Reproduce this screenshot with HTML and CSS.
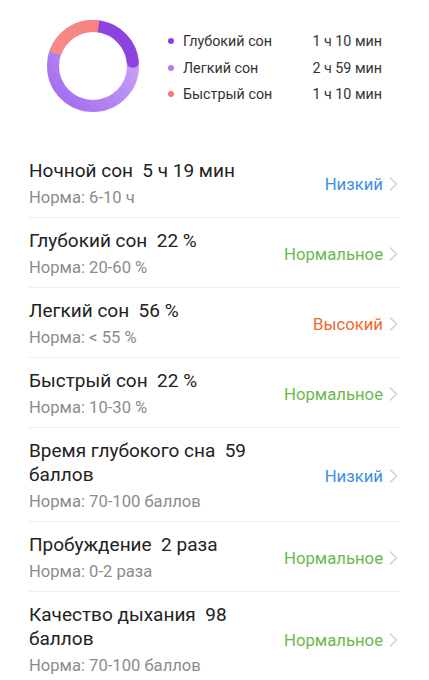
FILE: index.html
```html
<!DOCTYPE html>
<html lang="ru">
<head>
    <meta charset="UTF-8">
    <meta name="viewport" content="width=device-width, initial-scale=1.0">
    <title>Сон</title>
    <link rel="stylesheet" href="styles.css">
</head>
<body>
    <div class="summary">
        <svg class="donut" width="92" height="92" viewBox="0 0 92 92">
            <defs>
                <linearGradient id="gLight" x1="80" y1="20" x2="15" y2="80" gradientUnits="userSpaceOnUse">
                    <stop offset="0" stop-color="#c9a6f7"/>
                    <stop offset="1" stop-color="#a56ff0"/>
                </linearGradient>
                <linearGradient id="gDeep" x1="46" y1="6" x2="86" y2="46" gradientUnits="userSpaceOnUse">
                    <stop offset="0" stop-color="#ad84ea"/>
                    <stop offset="1" stop-color="#8c43df"/>
                </linearGradient>
                <linearGradient id="gRem" x1="8" y1="30" x2="50" y2="6" gradientUnits="userSpaceOnUse">
                    <stop offset="0" stop-color="#f5807c"/>
                    <stop offset="1" stop-color="#f98886"/>
                </linearGradient>
            </defs>
            <circle cx="46" cy="46" r="40" fill="none" stroke="url(#gLight)" stroke-width="12"/>
            <circle cx="46" cy="46" r="40" fill="none" stroke="url(#gDeep)" stroke-width="12"
                    pathLength="360" stroke-dasharray="76 284" stroke-linecap="round"
                    transform="rotate(-82 46 46)"/>
            <circle cx="46" cy="46" r="40" fill="none" stroke="url(#gRem)" stroke-width="12"
                    pathLength="360" stroke-dasharray="80 280"
                    transform="rotate(-162 46 46)"/>
        </svg>
        <div class="legend">
            <div class="legend-row">
                <span class="dot deep"></span>
                <span class="legend-name">Глубокий сон</span>
                <span class="legend-value">1 ч 10 мин</span>
            </div>
            <div class="legend-row">
                <span class="dot light"></span>
                <span class="legend-name">Легкий сон</span>
                <span class="legend-value">2 ч 59 мин</span>
            </div>
            <div class="legend-row">
                <span class="dot rem"></span>
                <span class="legend-name">Быстрый сон</span>
                <span class="legend-value">1 ч 10 мин</span>
            </div>
        </div>
    </div>

    <div class="list" id="list"></div>

    <script>
        const items = [
            { name: 'Ночной сон', value: '5 ч 19 мин', norm: 'Норма: 6-10 ч', status: 'Низкий', level: 'low' },
            { name: 'Глубокий сон', value: '22 %', norm: 'Норма: 20-60 %', status: 'Нормальное', level: 'ok' },
            { name: 'Легкий сон', value: '56 %', norm: 'Норма: < 55 %', status: 'Высокий', level: 'high' },
            { name: 'Быстрый сон', value: '22 %', norm: 'Норма: 10-30 %', status: 'Нормальное', level: 'ok' },
            { name: 'Время глубокого сна', value: '59 баллов', norm: 'Норма: 70-100 баллов', status: 'Низкий', level: 'low' },
            { name: 'Пробуждение', value: '2 раза', norm: 'Норма: 0-2 раза', status: 'Нормальное', level: 'ok' },
            { name: 'Качество дыхания', value: '98 баллов', norm: 'Норма: 70-100 баллов', status: 'Нормальное', level: 'ok' }
        ];

        const list = document.getElementById('list');
        const chevron = '<svg class="chevron" width="10" height="16" viewBox="0 0 10 16"><path d="M2 1.5 L8.5 8 L2 14.5" fill="none" stroke="#cfcfcf" stroke-width="1.4"/></svg>';

        items.forEach(item => {
            const row = document.createElement('div');
            row.className = 'row';
            row.innerHTML = `
                <div class="info">
                    <div class="title">${item.name}&nbsp; ${item.value}</div>
                    <div class="norm">${item.norm.replace('<', '&lt;')}</div>
                </div>
                <div class="status ${item.level}">${item.status}</div>
                ${chevron}
            `;
            list.appendChild(row);
        });
    </script>
</body>
</html>
```

FILE: styles.css
```css
body {
    margin: 0;
    background: #fff;
    font-family: Roboto, "Noto Sans", sans-serif;
    color: #222;
}
.summary {
    display: flex;
    align-items: center;
    height: 148px;
    padding: 0 0 16px 47px;
    box-sizing: border-box;
}
.donut {
    flex: none;
}
.legend {
    margin-left: 29px;
    width: 214px;
    display: flex;
    flex-direction: column;
    padding-top: 3px;
}
.legend-row {
    display: flex;
    align-items: center;
    height: 26.5px;
    font-size: 14.3px;
    color: #333;
}
.dot {
    width: 6px;
    height: 6px;
    border-radius: 50%;
    margin-right: 9px;
}
.dot.deep { background: #8d3fe0; }
.dot.light { background: #b07cf1; }
.dot.rem { background: #f47676; }
.legend-value {
    margin-left: auto;
}
.list {
    padding: 0 29px;
}
.row {
    display: flex;
    align-items: center;
    padding: 11px 0 8px;
    border-bottom: 1px solid #eeeeee;
}
.row:last-child {
    border-bottom: none;
}
.info {
    flex: 1;
    min-width: 0;
}
.title {
    font-size: 19px;
    line-height: 24px;
    color: #222;
}
.norm {
    margin-top: 4px;
    font-size: 16.6px;
    line-height: 22px;
    color: #8c8c8c;
}
.status {
    font-size: 16.7px;
    margin-left: 10px;
    white-space: nowrap;
}
.status.low { color: #3d8fe6; }
.status.ok { color: #6bb94a; }
.status.high { color: #ef6a2c; }
.chevron {
    flex: none;
    margin-left: 5px;
    margin-right: 2px;
}
```
